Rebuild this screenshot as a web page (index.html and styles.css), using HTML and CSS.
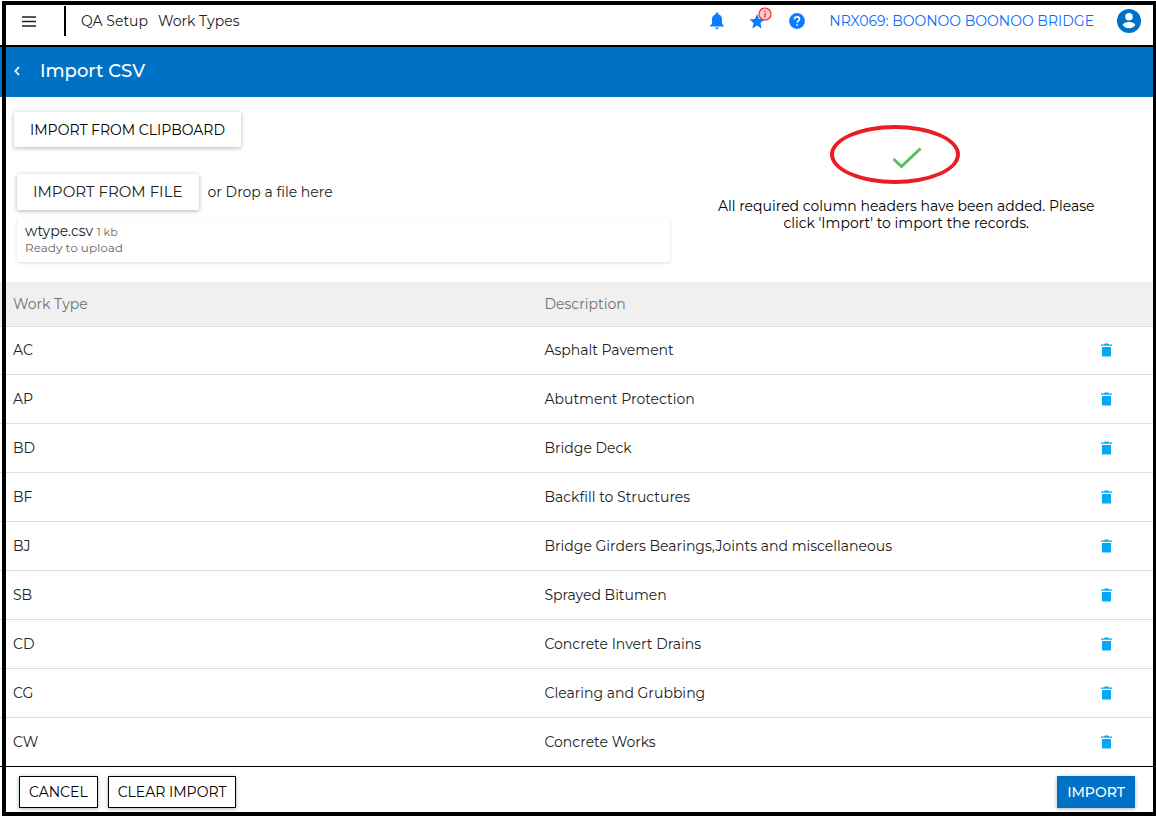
FILE: index.html
```html
<!DOCTYPE html>
<html lang="en">
<head>
<meta charset="utf-8">
<meta name="viewport" content="width=device-width, initial-scale=1">
<title>Import CSV</title>
<link rel="stylesheet" href="styles.css">
</head>
<body>
<svg class="sprite" aria-hidden="true">
  <symbol id="trash" viewBox="0 0 11 14"><path d="M0 1.400h3L3.800.4h3.400l.8 1h3v1.400H0zM1 4h9v8.400q0 1.200-1.200 1.200H2.200Q1 13.600 1 12.400z"/></symbol>
</svg>
<div class="page">
  <header class="topbar">
    <button class="icon-button menu" aria-label="Menu">
      <svg width="14" height="11" viewBox="0 0 14 11"><path d="M0 1h14M0 5.500h14M0 10h14" stroke="#222" stroke-width="1.300"/></svg>
    </button>
    <nav class="crumbs">
      <a href="#">QA Setup</a>
      <a href="#">Work Types</a>
    </nav>
    <div class="tools">
      <button class="icon-button" aria-label="Notifications">
        <svg width="16" height="18" viewBox="0 0 16 18" fill="#0a7cff"><path d="M8 .6c.8 0 1.300.5 1.300 1.200v.5c2.300.6 3.700 2.600 3.700 5v4.500l1.900 1.900v.9H1.100v-.9L3 11.800V7.300c0-2.400 1.400-4.400 3.700-5v-.5C6.700 1.100 7.200.6 8 .6zM6.400 15.500h3.200c0 1-.7 1.700-1.600 1.700s-1.600-.7-1.600-1.700z"/></svg>
      </button>
      <button class="icon-button favourites" aria-label="Favourites">
        <svg width="16" height="15" viewBox="0 0 16 15" fill="#0a7cff"><path d="M8 0l2.100 5.100 5.500.4-4.200 3.600 1.300 5.400L8 11.600l-4.700 2.900 1.300-5.400L.4 5.500l5.500-.4z"/></svg>
        <svg class="badge" width="14" height="14" viewBox="0 0 14 14"><circle cx="7" cy="7" r="6" fill="#ffc9c9" stroke="#f3262b" stroke-width="1.200"/><path d="M7 3.500v1.300M7 6v4.500" stroke="#f3262b" stroke-width="1.300"/></svg>
      </button>
      <button class="icon-button" aria-label="Help">
        <svg width="16" height="16" viewBox="0 0 16 16"><circle cx="8" cy="8" r="7.900" fill="#0a7cff"/><path d="M5.500 6.200C5.500 4.700 6.600 3.700 8 3.700s2.500 1 2.500 2.300c0 1.600-2.300 1.900-2.300 3.700" fill="none" stroke="#fff" stroke-width="1.600"/><path d="M7.300 11.200h1.700v1.600H7.300z" fill="#fff"/></svg>
      </button>
      <a class="project" href="#">NRX069: BOONOO BOONOO BRIDGE</a>
      <button class="icon-button" aria-label="Account">
        <svg width="24" height="24" viewBox="0 0 24 24"><circle cx="12" cy="12" r="12" fill="#0072c6"/><circle cx="12" cy="7.800" r="3.800" fill="#fff"/><path d="M5.800 16.200c.3-2.100 3.500-3.100 6.200-3.100s5.900 1 6.200 3.100c-1.300 1.800-3.600 3-6.200 3s-4.900-1.200-6.200-3z" fill="#fff"/></svg>
      </button>
    </div>
  </header>

  <div class="titlebar">
    <button class="icon-button back" aria-label="Back">
      <svg width="6" height="10" viewBox="0 0 6 10"><path d="M5 1L1.300 5 5 9" fill="none" stroke="#fff" stroke-width="1.700"/></svg>
    </button>
    <h1>Import CSV</h1>
  </div>

  <main class="content">
    <section class="source">
      <div class="upload">
        <button class="raised clipboard">IMPORT FROM CLIPBOARD</button>
        <div class="file-row">
          <button class="raised file">IMPORT FROM FILE</button>
          <span>or Drop a file here</span>
        </div>
        <div class="file-card">
          <div><span class="file-name">wtype.csv</span> <small>1 kb</small></div>
          <div class="file-state">Ready to upload</div>
        </div>
      </div>
      <div class="status">
        <div class="ring">
          <svg width="30" height="22" viewBox="0 0 30 22"><path d="M1.500 12l8 7.500L28.500 1.500" fill="none" stroke="#55c05a" stroke-width="3"/></svg>
        </div>
        <p>All required column headers have been added. Please<br>click 'Import' to import the records.</p>
      </div>
    </section>

    <table class="records">
      <thead>
        <tr><th class="type">Work Type</th><th>Description</th><th class="action"></th></tr>
      </thead>
      <tbody>
        <tr><td>AC</td><td>Asphalt Pavement</td><td><button class="icon-button" aria-label="Delete AC"><svg class="trash"><use href="#trash"/></svg></button></td></tr>
        <tr><td>AP</td><td>Abutment Protection</td><td><button class="icon-button" aria-label="Delete AP"><svg class="trash"><use href="#trash"/></svg></button></td></tr>
        <tr><td>BD</td><td>Bridge Deck</td><td><button class="icon-button" aria-label="Delete BD"><svg class="trash"><use href="#trash"/></svg></button></td></tr>
        <tr><td>BF</td><td>Backfill to Structures</td><td><button class="icon-button" aria-label="Delete BF"><svg class="trash"><use href="#trash"/></svg></button></td></tr>
        <tr><td>BJ</td><td>Bridge Girders Bearings,Joints and miscellaneous</td><td><button class="icon-button" aria-label="Delete BJ"><svg class="trash"><use href="#trash"/></svg></button></td></tr>
        <tr><td>SB</td><td>Sprayed Bitumen</td><td><button class="icon-button" aria-label="Delete SB"><svg class="trash"><use href="#trash"/></svg></button></td></tr>
        <tr><td>CD</td><td>Concrete Invert Drains</td><td><button class="icon-button" aria-label="Delete CD"><svg class="trash"><use href="#trash"/></svg></button></td></tr>
        <tr><td>CG</td><td>Clearing and Grubbing</td><td><button class="icon-button" aria-label="Delete CG"><svg class="trash"><use href="#trash"/></svg></button></td></tr>
        <tr><td>CW</td><td>Concrete Works</td><td><button class="icon-button" aria-label="Delete CW"><svg class="trash"><use href="#trash"/></svg></button></td></tr>
      </tbody>
    </table>
  </main>

  <footer class="actions">
    <button class="action-button">CANCEL</button>
    <button class="action-button">CLEAR IMPORT</button>
    <button class="action-button primary">IMPORT</button>
  </footer>
  <div class="frame"></div>
</div>
</body>
</html>
```

FILE: styles.css
```css
* { box-sizing: border-box; }

body {
  margin: 0;
  background: #fff;
  color: #222;
  font: 14px/18px Montserrat, Inter, sans-serif;
}

button { font: inherit; color: inherit; cursor: pointer; }
a { color: inherit; text-decoration: none; }
svg { display: block; }
.sprite { display: none; }

.page {
  position: relative;
  display: flex;
  flex-direction: column;
  height: 100vh;
  overflow: hidden;
}

.frame {
  position: absolute;
  inset: 1px 0 0 2px;
  border: 4px solid #000;
  border-right-width: 3px;
  pointer-events: none;
}

.icon-button {
  display: flex;
  padding: 0;
  border: 0;
  background: none;
}

.topbar {
  display: flex;
  flex: none;
  align-items: center;
  height: 47px;
  padding: 0 15px 3px 22px;
  border-bottom: 2px solid #000;
}

.crumbs {
  display: flex;
  align-items: center;
  gap: 10px;
  height: 30px;
  margin-left: 28px;
  padding-left: 15px;
  border-left: 2px solid #000;
}

.tools {
  display: flex;
  align-items: center;
  gap: 24px;
  margin-left: auto;
}

.favourites { position: relative; }
.badge { position: absolute; top: -7px; right: -7px; }
.project { margin-right: -1px; color: #0a6cff; }

.titlebar {
  display: flex;
  flex: none;
  align-items: center;
  gap: 20px;
  height: 50px;
  padding: 0 14px 2px;
  background: #0072c6;
  color: #fff;
}

.titlebar h1 { margin: 0; font-size: 18px; font-weight: 500; line-height: 24px; }

.content { flex: 1; min-height: 0; overflow: hidden; }

.source {
  display: grid;
  grid-template-columns: 58% 1fr;
  height: 185px;
  padding-top: 15px;
}

.upload { padding-left: 14px; }

.raised {
  height: 35px;
  padding: 0 16px;
  border: 0;
  border-radius: 1px;
  background: #fff;
  box-shadow: 0 1px 4px rgba(0, 0, 0, .3);
}

.clipboard { color: #000; }
.file { height: 36px; font-size: 15px; }

.file-row {
  display: flex;
  align-items: center;
  gap: 9px;
  margin: 27px 0 9px 3px;
}

.file-card {
  height: 43px;
  margin-left: 3px;
  padding: 4px 8px;
  box-shadow: 0 1px 3px rgba(0, 0, 0, .14);
  line-height: 16px;
}

.file-card small { font-size: 11px; color: #666; }
.file-state { font-size: 12px; color: #666; }

.status {
  display: flex;
  flex-direction: column;
  align-items: center;
  padding: 13px 14px 0 0;
  color: #000;
}

.ring {
  display: flex;
  align-items: center;
  justify-content: flex-end;
  width: 130px;
  height: 59px;
  margin-right: 23px;
  padding: 6px 34px 0 0;
  border: 4px solid #ed1c24;
  border-radius: 50%;
}

.status p { margin: 14px 0 0; text-align: center; line-height: 17px; }

.records { width: 100%; border-collapse: separate; border-spacing: 0; table-layout: fixed; }
.records th, .records td { height: 49px; padding: 0; border-bottom: 1px solid #ddd; text-align: left; }
.records th { height: 45px; background: #f0f0f0; color: #707070; font-weight: 400; }
.records tbody tr:first-child td { height: 48px; padding-bottom: 2px; }
.records th:first-child, .records td:first-child { padding-left: 13px; }
.records .type { width: 47.1%; }
.records .action { width: 55px; }
.trash { width: 11px; height: 14px; fill: #03a9f4; }

.actions {
  display: flex;
  flex: none;
  gap: 10px;
  height: 50px;
  padding: 9px 21px 0 19px;
  border-top: 1px solid #000;
}

.action-button {
  height: 32px;
  padding: 0 9px;
  border: 1px solid #000;
  background: #fff;
  box-shadow: 0 1px 4px rgba(0, 0, 0, .3);
  color: #000;
}

.primary { margin-left: auto; border-color: #0072c6; background: #0072c6; color: #fff; font-weight: 500; }
```
